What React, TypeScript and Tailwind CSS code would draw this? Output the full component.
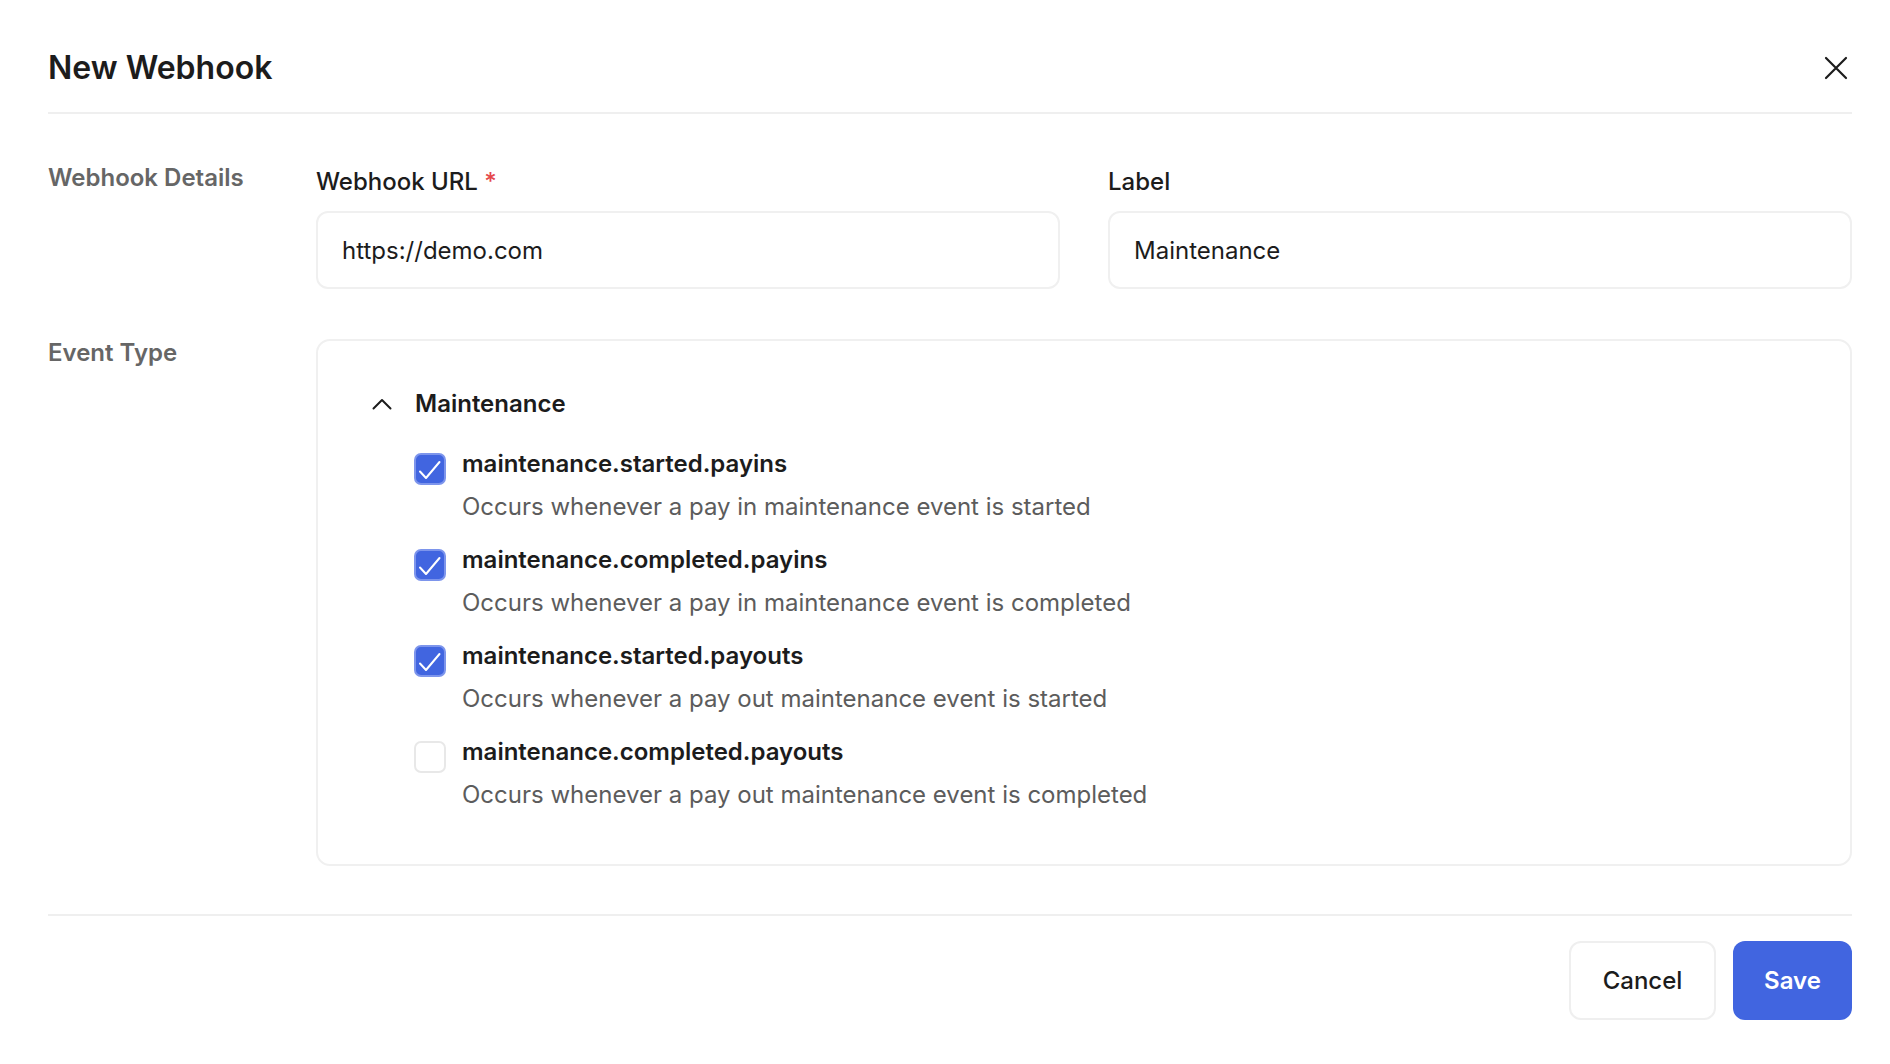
import React from "react";

const events = [
  {
    name: "maintenance.started.payins",
    desc: "Occurs whenever a pay in maintenance event is started",
    checked: true,
  },
  {
    name: "maintenance.completed.payins",
    desc: "Occurs whenever a pay in maintenance event is completed",
    checked: true,
  },
  {
    name: "maintenance.started.payouts",
    desc: "Occurs whenever a pay out maintenance event is started",
    checked: true,
  },
  {
    name: "maintenance.completed.payouts",
    desc: "Occurs whenever a pay out maintenance event is completed",
    checked: false,
  },
];

function Checkbox({ checked }: { checked: boolean }) {
  if (!checked) {
    return (
      <div className="w-8 h-8 rounded-[7px] border-2 border-[#e8e8e8] bg-white flex-shrink-0 mt-[5px]" />
    );
  }
  return (
    <div className="w-8 h-8 rounded-[7px] border-2 border-[#7d95ec] bg-[#4165e0] flex-shrink-0 mt-[5px] flex items-center justify-center">
      <svg width="28" height="28" viewBox="0 0 28 28" fill="none">
        <path d="M4 16.5 L10 23 L23.5 7" stroke="white" strokeWidth="2" strokeLinecap="round" strokeLinejoin="round" />
      </svg>
    </div>
  );
}

export default function App() {
  return (
    <div className="min-h-screen bg-white pl-12 pr-[38px] text-[#1c1c1c] font-['Inter','Noto_Sans',sans-serif]">
      {/* header */}
      <div className="flex items-center justify-between pt-12 pb-6 border-b-2 border-[#efefef]">
        <h1 className="text-[32px] leading-10 font-semibold">New Webhook</h1>
        <button className="w-8 h-8 flex items-center justify-center">
          <svg width="32" height="32" viewBox="0 0 32 32" fill="none">
            <path d="M6 6 L26 26 M26 6 L6 26" stroke="#1c1c1c" strokeWidth="2.2" strokeLinecap="round" />
          </svg>
        </button>
      </div>

      {/* webhook details */}
      <div className="grid grid-cols-[268px_1fr] pt-[54px]">
        <div className="-mt-1 text-[24px] leading-7 font-semibold text-[#666666]">Webhook Details</div>
        <div className="grid grid-cols-2 gap-12">
          <div>
            <label className="block text-[24px] leading-7 font-medium">
              Webhook URL <span className="text-[#e5484d]">*</span>
            </label>
            <input
              type="text"
              defaultValue="https://demo.com"
              className="mt-[15px] w-full h-[78px] rounded-xl border-2 border-[#f0f0f0] px-6 text-[24px] text-[#1c1c1c] outline-none"
            />
          </div>
          <div>
            <label className="block text-[24px] leading-7 font-medium">Label</label>
            <input
              type="text"
              defaultValue="Maintenance"
              className="mt-[15px] w-full h-[78px] rounded-xl border-2 border-[#f0f0f0] px-6 text-[24px] text-[#1c1c1c] outline-none"
            />
          </div>
        </div>
      </div>

      {/* event type */}
      <div className="grid grid-cols-[268px_1fr] mt-[50px]">
        <div className="text-[24px] leading-7 font-semibold text-[#666666]">Event Type</div>
        <div className="rounded-[14px] border-2 border-[#f0f0f0] pl-[54px] pt-[47px] pb-[53px]">
          <div className="flex items-center h-8">
            <svg width="20" height="12" viewBox="0 0 20 12" fill="none" className="mr-[23px]">
              <path d="M1.5 10.5 L10 2 L18.5 10.5" stroke="#1c1c1c" strokeWidth="2" strokeLinecap="round" strokeLinejoin="round" />
            </svg>
            <span className="text-[24px] font-semibold">Maintenance</span>
          </div>
          <div className="ml-[42px] mt-[28px] flex flex-col gap-[21px]">
            {events.map((e) => (
              <div key={e.name} className="flex gap-4">
                <Checkbox checked={e.checked} />
                <div>
                  <div className="text-[24px] leading-8 font-semibold">{e.name}</div>
                  <div className="mt-[11px] text-[24px] leading-8 text-[#5c5c5c]">{e.desc}</div>
                </div>
              </div>
            ))}
          </div>
        </div>
      </div>

      {/* footer */}
      <div className="mt-[48px] border-t-2 border-[#efefef] pt-[25px] flex justify-end gap-[17px]">
        <button className="w-[147px] h-[79px] rounded-xl border-2 border-[#efefef] bg-white text-[24px] font-medium text-[#1c1c1c]">
          Cancel
        </button>
        <button className="w-[119px] h-[79px] rounded-xl bg-[#4165e0] text-[24px] font-semibold text-white">
          Save
        </button>
      </div>
    </div>
  );
}
